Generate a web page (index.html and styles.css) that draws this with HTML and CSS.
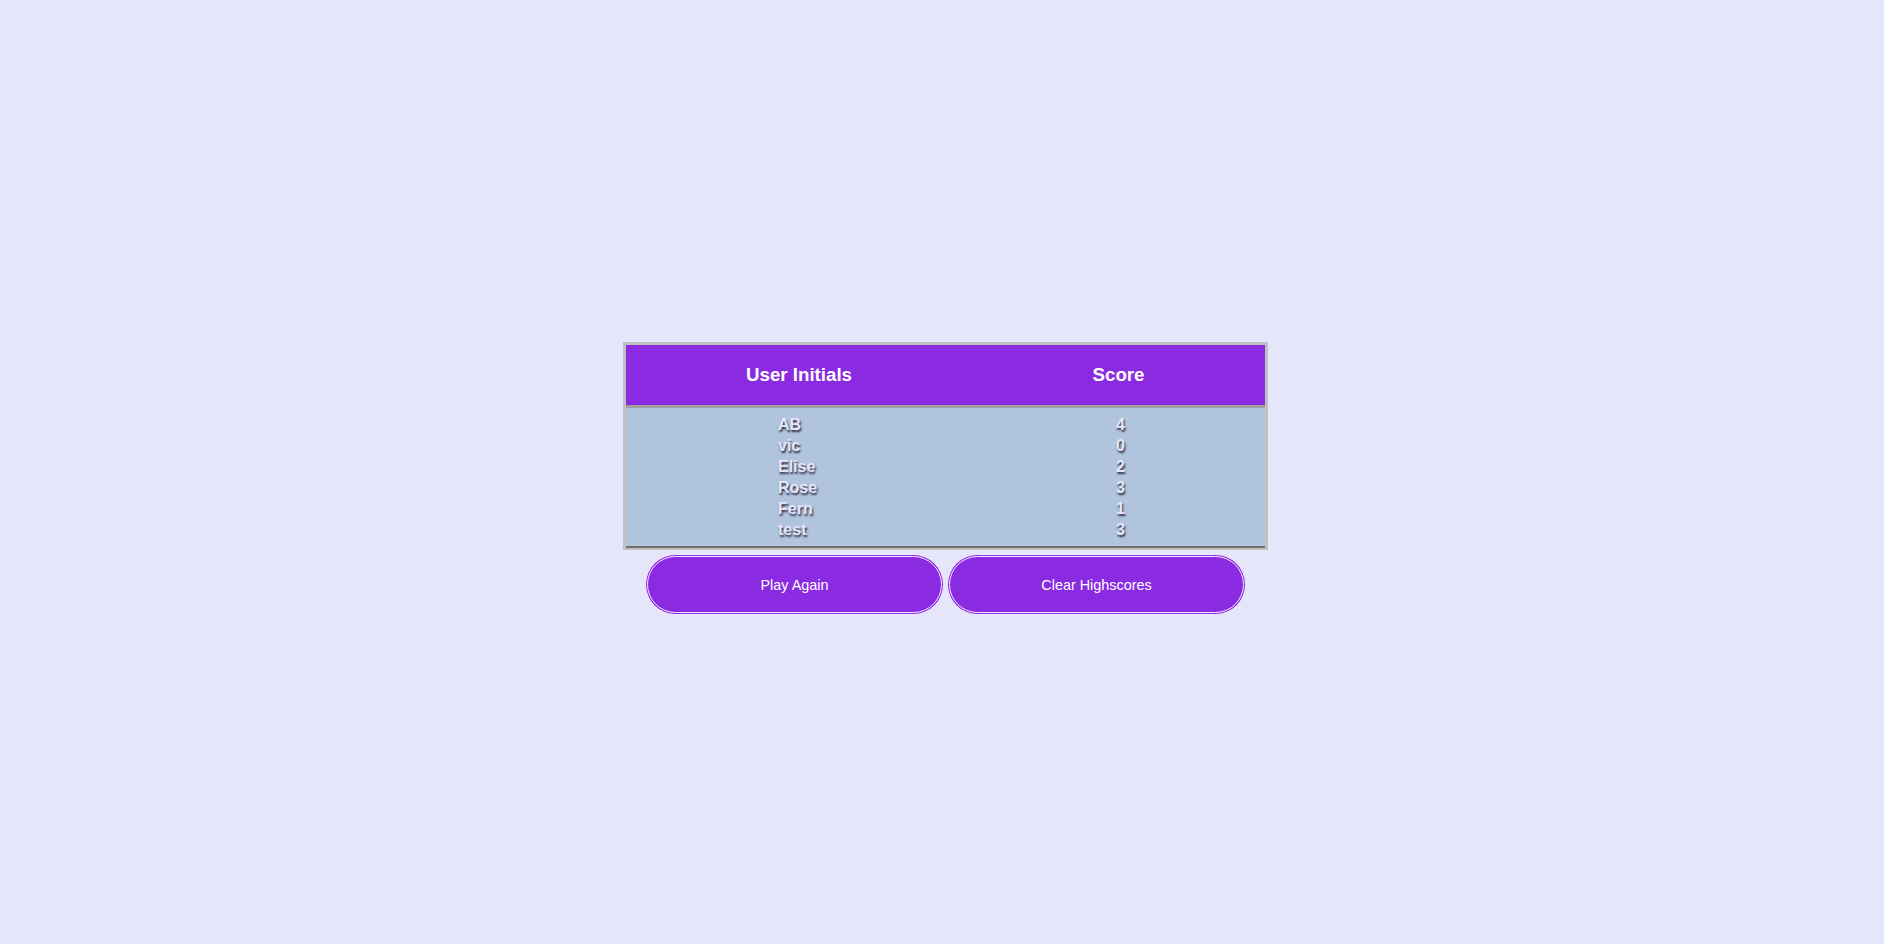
FILE: index.html
```html
<!DOCTYPE html>
<html>
<head>
<meta charset="utf-8">
<link rel="stylesheet" href="styles.css">
</head>
<body>
<main class="page">
  <div class="board">
    <div class="board-head">
      <div class="th">User Initials</div>
      <div class="th">Score</div>
    </div>
    <div class="board-body">
      <div class="names">
        <div>AB</div>
        <div>vic</div>
        <div>Elise</div>
        <div>Rose</div>
        <div>Fern</div>
        <div>test</div>
      </div>
      <div class="scores">
        <div>4</div>
        <div>0</div>
        <div>2</div>
        <div>3</div>
        <div>1</div>
        <div>3</div>
      </div>
    </div>
  </div>
  <div class="actions">
    <button class="btn">Play Again</button>
    <button class="btn">Clear Highscores</button>
  </div>
</main>
</body>
</html>
```

FILE: styles.css
```css
html, body {
  margin: 0;
  padding: 0;
}
body {
  background: #e6e6fa;
  font-family: "Liberation Sans", Arial, sans-serif;
  height: 944px;
}
.page {
  display: flex;
  flex-direction: column;
  align-items: center;
  padding-top: 342px;
  padding-left: 7px;
}
.board {
  width: 639px;
  border-style: solid;
  border-color: #c0c0c0;
  border-width: 3px 3px 2px 3px;
}
.board-head {
  display: grid;
  grid-template-columns: 346px 1fr;
  height: 60px;
  background: #8a2be2;
  border-bottom: 3px solid #a0a0a0;
  align-items: center;
}
.th {
  text-align: center;
  color: #ffffff;
  font-weight: bold;
  font-size: 18.72px;
}
.board-body {
  display: grid;
  grid-template-columns: 346px 1fr;
  background: #b0c4de;
  padding: 6px 0 6px;
  border-bottom: 2px solid #6e6e6e;
  font-weight: bold;
  font-size: 16px;
  line-height: 21px;
  color: #e6e6fa;
  text-shadow: 1px 2px 2px #2e2e40;
}
.names {
  padding-left: 152px;
  text-align: left;
}
.scores {
  text-align: center;
  padding-left: 4px;
}
.actions {
  display: flex;
  gap: 3px;
  margin-top: 4px;
}
.btn {
  width: 299px;
  height: 61px;
  border-radius: 31px;
  border: 3px double #f4ecff;
  background: #8a2be2;
  color: #ffffff;
  font-family: "Liberation Sans", Arial, sans-serif;
  font-size: 14.4px;
  padding: 0;
  cursor: pointer;
}
```
